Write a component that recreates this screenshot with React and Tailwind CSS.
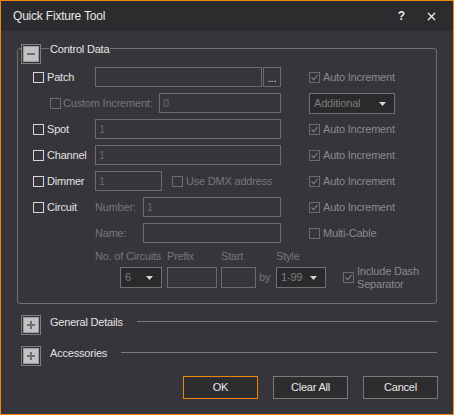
import { X } from 'lucide-react';

function Box({ checked, dim }) {
  return (
    <span
      className={`flex h-[11px] w-[11px] shrink-0 items-center justify-center border ${
        dim ? 'border-[#6c6c6c]' : 'border-[#d6d6d6]'
      }`}
    >
      {checked && (
        <svg width="9" height="9" viewBox="0 0 9 9">
          <path d="M1.5 4.5 L3.6 6.6 L7.6 2.2" stroke={dim ? '#7e7e7e' : '#dddddd'} strokeWidth="1.1" fill="none" />
        </svg>
      )}
    </span>
  );
}

function Field({ w, value, tall }) {
  return (
    <div className={`${w} ${tall ? 'h-[21px]' : 'h-[20px]'} flex items-center border border-[#6b6b6b] pl-[3px] text-[#6a6a6a]`}>
      {value}
    </div>
  );
}

function Drop({ w, value }) {
  return (
    <div className={`${w} h-[21px] flex items-center justify-between border border-[#727272] bg-[#2a2a2c] pl-[4px] pr-[8px] text-[#7c7c7c]`}>
      <span>{value}</span>
      <svg width="7" height="4" viewBox="0 0 7 4">
        <path d="M0 0 H7 L3.5 4 Z" fill="#d8d8d8" />
      </svg>
    </div>
  );
}

function Auto({ label = 'Auto Increment', checked = true }) {
  return (
    <div className="ml-[28px] flex items-center text-[#8a8a8a]">
      <Box checked={checked} dim />
      <span className="ml-[3px]">{label}</span>
    </div>
  );
}

function Opt({ label }) {
  return (
    <div className="flex w-[62px] items-center">
      <Box />
      <span className="ml-[3px] text-[#e2e2e2]">{label}</span>
    </div>
  );
}

function Toggle({ open }) {
  return (
    <div className="h-[20px] w-[20px] shrink-0 border border-[#7d7d7d] bg-[#36353b] p-px">
      <div className="flex h-full w-full items-center justify-center border border-[#9c9c9c] bg-[#c2c2c2]">
        <svg width="10" height="10" viewBox="0 0 10 10">
          <rect x="1" y="4" width="8" height="2" fill="#6f6f6f" />
          {!open && <rect x="4" y="1" width="2" height="8" fill="#6f6f6f" />}
        </svg>
      </div>
    </div>
  );
}

function Section({ label }) {
  return (
    <div className="ml-[20px] mr-[16px] flex items-start">
      <Toggle />
      <span className="ml-[9px] leading-[14px] text-[#e2e2e2]">{label}</span>
      <div className="ml-[14px] mt-[6px] h-px flex-1 bg-[#7a7a7a]" />
    </div>
  );
}

export default function App() {
  return (
    <div className="flex h-[415px] w-[454px] flex-col border border-[#f0860f] bg-[#36353b] text-[11px] tracking-[-0.2px] font-['Liberation_Sans',Arial,sans-serif]">
      {/* Title bar */}
      <div className="flex h-[30px] items-center bg-[#2c2c2f] pl-[12px] pr-[15px] text-[12px] text-[#e8e8e8]">
        <span className="flex-1">Quick Fixture Tool</span>
        <span className="mr-[20px] font-bold">?</span>
        <X size={13} strokeWidth={2.2} className="text-[#f0f0f0]" />
      </div>

      {/* Control Data group */}
      <div className="mx-[16px] mt-[17px] rounded-[3px] border border-[#707070] pb-[15px]">
        <div className="-mt-[5px] flex items-start pl-[3px]">
          <Toggle open />
          <span className="-mt-[2px] ml-[8px] bg-[#36353b] px-px leading-[14px] text-[#e6e6e6]">Control Data</span>
        </div>

        <div className="mt-[3px] flex h-[20px] items-center pl-[15px]">
          <Opt label="Patch" />
          <div className="flex w-[186px] items-center gap-px">
            <Field w="w-[167px]" />
            <div className="flex h-[20px] w-[18px] items-end justify-center border border-[#6b6b6b] pb-[4px] text-[#e0e0e0] leading-[8px]">...</div>
          </div>
          <Auto />
        </div>

        <div className="mt-[6px] flex h-[20px] items-center pl-[32px]">
          <div className="flex w-[109px] items-center text-[#777777]">
            <Box dim />
            <span className="ml-[2px]">Custom Increment:</span>
          </div>
          <Field w="w-[122px]" value="0" />
          <div className="ml-[28px] self-start">
            <Drop w="w-[86px]" value="Additional" />
          </div>
        </div>

        <div className="mt-[6px] flex h-[20px] items-center pl-[15px]">
          <Opt label="Spot" />
          <div className="w-[186px]">
            <Field w="w-[186px]" value="1" />
          </div>
          <Auto />
        </div>

        <div className="mt-[6px] flex h-[20px] items-center pl-[15px]">
          <Opt label="Channel" />
          <div className="w-[186px]">
            <Field w="w-[186px]" value="1" />
          </div>
          <Auto />
        </div>

        <div className="mt-[6px] flex h-[20px] items-center pl-[15px]">
          <Opt label="Dimmer" />
          <div className="flex w-[186px] items-center">
            <Field w="w-[67px]" value="1" />
            <span className="ml-[10px]"><Box dim /></span>
            <span className="ml-[3px] text-[#777777]">Use DMX address</span>
          </div>
          <Auto />
        </div>

        <div className="mt-[6px] flex h-[20px] items-center pl-[15px]">
          <Opt label="Circuit" />
          <div className="flex w-[186px] items-center">
            <span className="w-[48px] text-[#777777]">Number:</span>
            <Field w="w-[138px]" value="1" />
          </div>
          <Auto />
        </div>

        <div className="mt-[6px] flex h-[20px] items-center pl-[15px]">
          <div className="w-[62px]" />
          <div className="flex w-[186px] items-center">
            <span className="w-[48px] text-[#777777]">Name:</span>
            <Field w="w-[138px]" />
          </div>
          <Auto label="Multi-Cable" checked={false} />
        </div>

        <div className="mt-[6px] flex h-[14px] items-center pl-[77px] text-[#777777]">
          <span className="w-[72px]">No. of Circuits</span>
          <span className="w-[54px]">Prefix</span>
          <span className="w-[55px]">Start</span>
          <span>Style</span>
        </div>

        <div className="mt-[4px] flex h-[21px] items-center pl-[102px]">
          <Drop w="w-[42px]" value="6" />
          <div className="ml-[5px]"><Field w="w-[50px]" tall /></div>
          <div className="ml-[4px]"><Field w="w-[35px]" tall /></div>
          <span className="w-[20px] pl-[3px] text-[#777777]">by</span>
          <Drop w="w-[50px]" value="1-99" />
          <span className="ml-[17px]"><Box checked dim /></span>
          <span className="ml-[3px] leading-[13px] text-[#8a8a8a]">
            Include Dash
            <br />
            Separator
          </span>
        </div>
      </div>

      <div className="mt-[11px]">
        <Section label="General Details" />
      </div>
      <div className="mt-[11px]">
        <Section label="Accessories" />
      </div>

      <div className="mt-[10px] flex justify-end gap-[15px] pr-[15px] text-[#e8e8e8]">
        <button className="h-[23px] w-[75px] border border-[#f0860f] bg-[#2d2d30]">OK</button>
        <button className="h-[23px] w-[75px] border border-[#7a7a7a] bg-[#2d2d30]">Clear All</button>
        <button className="h-[23px] w-[75px] border border-[#7a7a7a] bg-[#2d2d30]">Cancel</button>
      </div>
    </div>
  );
}
